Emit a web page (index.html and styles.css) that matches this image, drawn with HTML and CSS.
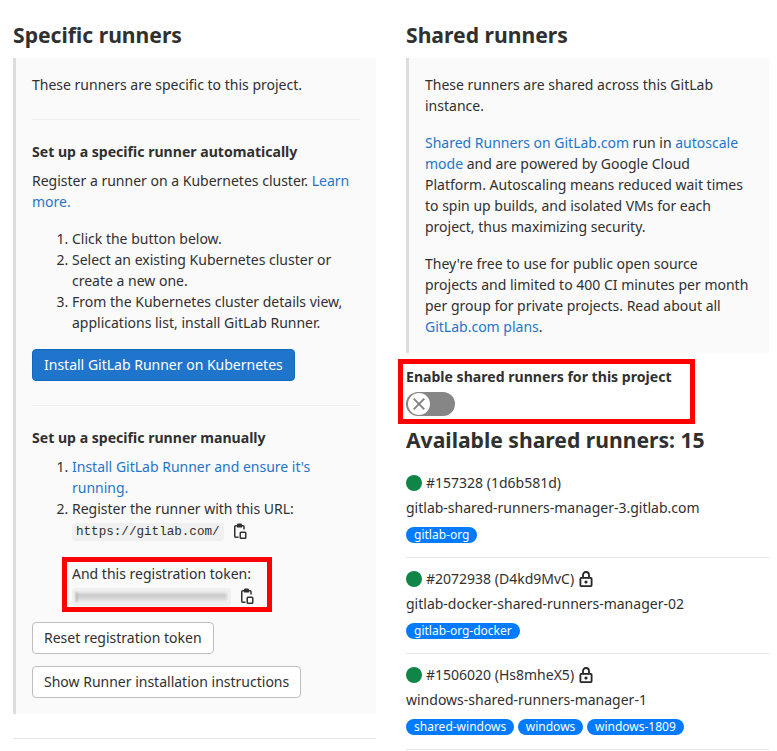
FILE: index.html
```html
<!DOCTYPE html>
<html lang="en">
<head>
    <meta charset="UTF-8">
    <title>Runners</title>
    <link rel="stylesheet" href="styles.css">
</head>
<body>
    <svg class="sprites" width="0" height="0">
        <symbol id="icon-copy" viewBox="0 0 16 16">
            <path fill="none" stroke="currentColor" stroke-width="1.5" d="M5 2.750H3.750a1 1 0 0 0-1 1v9.500a1 1 0 0 0 1 1H6.500M10 2.750h1a1 1 0 0 1 1 1V6.500"/>
            <path fill="currentColor" d="M5 1.500A1.200 1.200 0 0 1 6.200 .5h2.600A1.200 1.200 0 0 1 10 1.500V4.500H5z"/>
            <rect x="8.250" y="9.250" width="5.500" height="6" rx=".8" fill="none" stroke="currentColor" stroke-width="1.500"/>
        </symbol>
        <symbol id="icon-lock" viewBox="0 0 16 16">
            <path fill="none" stroke="currentColor" stroke-width="1.800" d="M5 6.500V4a3 3 0 0 1 6 0v2.500"/>
            <rect x="2.400" y="6.900" width="11.200" height="8.200" rx=".8" fill="none" stroke="currentColor" stroke-width="1.800"/>
            <circle cx="8" cy="11" r="1.600" fill="currentColor"/>
        </symbol>
    </svg>

    <div class="row">
        <section class="col">
            <h3>Specific runners</h3>
            <div class="bs-callout">
                <p>These runners are specific to this project.</p>
                <hr>
                <h5>Set up a specific runner automatically</h5>
                <p>Register a runner on a Kubernetes cluster. <a href="#">Learn more.</a></p>
                <ol>
                    <li>Click the button below.</li>
                    <li>Select an existing Kubernetes cluster or create a new one.</li>
                    <li>From the Kubernetes cluster details view, applications list, install GitLab Runner.</li>
                </ol>
                <button class="btn btn-primary">Install GitLab Runner on Kubernetes</button>
                <hr>
                <h5>Set up a specific runner manually</h5>
                <ol class="manual">
                    <li><a href="#">Install GitLab Runner and ensure it's running.</a></li>
                    <li>Register the runner with this URL:
                        <div class="copy-row">
                            <code>https://gitlab.com/</code>
                            <svg class="icon copy"><use href="#icon-copy"/></svg>
                        </div>
                    </li>
                    <li class="token">And this registration token:
                        <div class="copy-row">
                            <code class="token-code"><span class="smear"></span></code>
                            <svg class="icon copy"><use href="#icon-copy"/></svg>
                        </div>
                        <span class="marker marker-token"></span>
                    </li>
                </ol>
                <div class="actions">
                    <button class="btn">Reset registration token</button>
                    <button class="btn">Show Runner installation instructions</button>
                </div>
            </div>
            <hr class="end-rule">
        </section>

        <section class="col">
            <h3>Shared runners</h3>
            <div class="bs-callout shared">
                <p>These runners are shared across this GitLab instance.</p>
                <p><a href="#">Shared Runners on GitLab.com</a> run in <a href="#">autoscale mode</a> and are powered by Google Cloud Platform. Autoscaling means reduced wait times to spin up builds, and isolated VMs for each project, thus maximizing security.</p>
                <p>They're free to use for public open source projects and limited to 400 CI minutes per month per group for private projects. Read about all <a href="#">GitLab.com plans</a>.</p>
            </div>
            <div class="toggle-block">
                <label>Enable shared runners for this project</label>
                <div class="toggle">
                    <span class="knob">
                        <svg viewBox="0 0 16 16"><path d="M2.700 2.700l10.600 10.600M13.300 2.700L2.700 13.300"/></svg>
                    </span>
                </div>
                <span class="marker marker-toggle"></span>
            </div>
            <h4>Available shared runners: 15</h4>

            <div class="runner">
                <div class="runner-title"><span class="dot"></span>#157328 (1d6b581d)</div>
                <div class="runner-name">gitlab-shared-runners-manager-3.gitlab.com</div>
                <div class="tags"><span class="badge">gitlab-org</span></div>
            </div>
            <div class="runner">
                <div class="runner-title"><span class="dot"></span>#2072938 (D4kd9MvC)<svg class="icon lock"><use href="#icon-lock"/></svg></div>
                <div class="runner-name">gitlab-docker-shared-runners-manager-02</div>
                <div class="tags"><span class="badge">gitlab-org-docker</span></div>
            </div>
            <div class="runner">
                <div class="runner-title"><span class="dot"></span>#1506020 (Hs8mheX5)<svg class="icon lock"><use href="#icon-lock"/></svg></div>
                <div class="runner-name">windows-shared-runners-manager-1</div>
                <div class="tags">
                    <span class="badge">shared-windows</span>
                    <span class="badge">windows</span>
                    <span class="badge">windows-1809</span>
                </div>
            </div>
        </section>
    </div>
</body>
</html>
```

FILE: styles.css
```css
html, body {
    height: 751px;
    overflow: hidden;
}
body {
    margin: 0;
    font-family: "Noto Sans", sans-serif;
    font-size: 14px;
    line-height: 21px;
    color: #303030;
    background: #fff;
}
.sprites {
    position: absolute;
}
.row {
    display: grid;
    grid-template-columns: 363px 363px;
    column-gap: 30px;
    padding: 21px 8px 0 13px;
}
a {
    color: #1f75cb;
    text-decoration: none;
}
h3, h4 {
    font-size: 21.140px;
    line-height: 28px;
    font-weight: 700;
}
h3 {
    margin: 0 0 9px;
}
h4 {
    margin: 10px 0 18px;
}
h5 {
    font-size: 14.080px;
    line-height: 21px;
    font-weight: 700;
    margin: 0 0 8px;
}
p {
    margin: 0 0 16px;
}
hr {
    border: 0;
    border-top: 1px solid #eee;
    margin: 24px 0 21px;
}
hr.end-rule {
    margin: 24px 0 0;
    border-top-color: #e5e5e5;
}
.bs-callout {
    background: #fafafa;
    border-left: 3px solid #ddd;
    padding: 16px;
}
.bs-callout p:last-child {
    margin-bottom: 0;
}
ol {
    margin: 0 0 16px;
    padding-left: 40px;
}
ol.manual {
    margin-bottom: 0;
}
.copy-row {
    display: flex;
    align-items: center;
    height: 21px;
    margin-top: 2px;
}
code {
    font-family: "Liberation Mono", monospace;
    font-size: 12.600px;
    line-height: 18px;
    background: #f0f0f0;
    color: #303030;
    border-radius: 4px;
    padding: 0 4px;
}
.token-code {
    width: 151px;
    height: 18px;
    display: flex;
    align-items: center;
}
.smear {
    display: block;
    width: 100%;
    height: 10px;
    background:
        linear-gradient(90deg, #8a8a8a 0, #8a8a8a 1px, transparent 1px),
        linear-gradient(180deg, #e6e6e6, #c8c8c8 35%, #d8d8d8 65%, #eeeeee);
    filter: blur(.8px);
}
.icon {
    width: 16px;
    height: 16px;
    flex: none;
}
.copy {
    color: #303030;
    margin: 0 0 2px 8px;
}
.token {
    list-style: none;
    position: relative;
    margin-top: 21px;
}
.marker {
    position: absolute;
    border: 5px solid #f00;
    box-sizing: border-box;
    pointer-events: none;
}
.marker-token {
    left: -10px;
    top: -6px;
    width: 210px;
    height: 55px;
}
.actions {
    display: flex;
    flex-direction: column;
    align-items: flex-start;
    gap: 12px;
    margin-top: 15px;
}
.btn {
    font-family: inherit;
    font-size: 14px;
    line-height: 20px;
    color: #303030;
    background: #fff;
    border: 1px solid #bfbfbf;
    border-radius: 4px;
    padding: 5px 11px;
    height: 32px;
}
.btn-primary {
    color: #fff;
    background: #1f75cb;
    border-color: #1068bf;
    display: block;
}
.toggle-block {
    position: relative;
    margin-top: 13px;
}
.toggle-block label {
    display: block;
    font-size: 14.080px;
    font-weight: 700;
    line-height: 21px;
    margin-bottom: 5px;
}
.marker-toggle {
    left: -8px;
    top: -7px;
    width: 297px;
    height: 65px;
}
.toggle {
    width: 49px;
    height: 24px;
    border-radius: 12px;
    background: #868686;
    display: flex;
    align-items: center;
}
.knob {
    display: block;
    width: 22px;
    height: 22px;
    margin-left: 1.500px;
    border-radius: 50%;
    background: #fff;
}
.knob svg {
    display: block;
    width: 16px;
    height: 16px;
    margin: 3px;
    fill: none;
    stroke: #808080;
    stroke-width: 1.800;
}
.runner {
    border-bottom: 1px solid #e5e5e5;
    padding-bottom: 13px;
    margin-bottom: 10px;
}
.runner-title {
    display: flex;
    align-items: center;
    height: 21px;
}
.dot {
    flex: none;
    width: 16px;
    height: 16px;
    border-radius: 50%;
    background: #108548;
    margin-right: 4px;
}
.lock {
    margin-left: 4px;
    color: #262626;
}
.runner-name {
    margin-top: 4px;
}
.tags {
    margin-top: 5px;
}
.badge {
    display: inline-block;
    font-size: 12px;
    line-height: 16px;
    color: #fff;
    background: #007bff;
    border-radius: 8px;
    padding: 0 8px;
}
```
